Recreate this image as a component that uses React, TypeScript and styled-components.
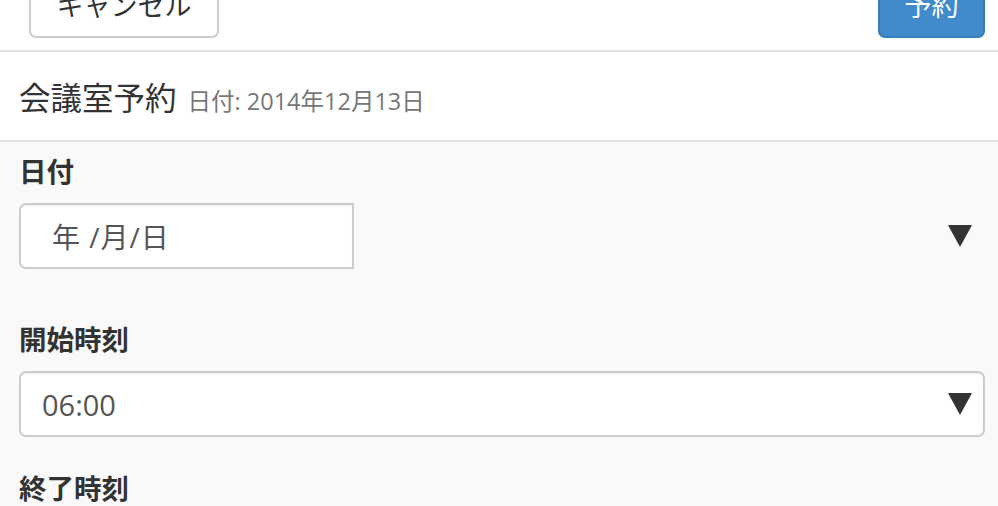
import React from "react";
import styled, { createGlobalStyle } from "styled-components";

const Global = createGlobalStyle`
  html, body { margin: 0; padding: 0; background: #f9f9f9; overflow: hidden; }
  body { font-family: "Open Sans", "Noto Sans CJK JP", sans-serif; color: #333; }
  * { box-sizing: border-box; }
`;

const Page = styled.div`
  width: 998px;
  margin-top: -28px;
`;

const ButtonBar = styled.div`
  display: flex;
  justify-content: space-between;
  align-items: flex-start;
  background: #fff;
  padding: 0 13px 12px 29px;
  border-bottom: 2px solid #e2e2e2;
`;

const Btn = styled.button<{ $primary?: boolean }>`
  height: 66px;
  padding: 0;
  white-space: nowrap;
  font-family: "Open Sans", "Noto Sans CJK JP", sans-serif;
  font-size: 27px;
  border-radius: 7px;
  border: 2px solid ${(p) => (p.$primary ? "#357ebd" : "#cccccc")};
  background: ${(p) => (p.$primary ? "#428bca" : "#ffffff")};
  color: ${(p) => (p.$primary ? "#ffffff" : "#333333")};
  width: ${(p) => (p.$primary ? "107px" : "190px")};
  line-height: 1;
`;

const TitleBar = styled.div`
  height: 90px;
  background: #fff;
  border-bottom: 2px solid #e2e2e2;
  display: flex;
  align-items: center;
  padding-left: 19px;
`;

const Title = styled.h3`
  margin: 0;
  font-weight: 400;
  font-size: 31.5px;
  color: #333;
  display: flex;
  align-items: baseline;
  gap: 11px;
`;

const Sub = styled.small`
  font-size: 23.5px;
  color: #777;
`;

const Form = styled.div`
  padding: 11px 13px 0 19px;
`;

const Group = styled.div<{ $mb: number }>`
  margin-bottom: ${(p) => p.$mb}px;
`;

const Label = styled.div`
  font-size: 27.5px;
  font-weight: 700;
  line-height: 37px;
  margin-bottom: 13px;
  color: #333;
`;

const DateRow = styled.div`
  display: flex;
  align-items: center;
  justify-content: space-between;
  padding-right: 13px;
`;

const DateBox = styled.div`
  width: 335px;
  height: 66px;
  background: #fff;
  border: 2px solid #cccccc;
  border-radius: 7px 0 0 7px;
  box-shadow: inset 0 1px 1px rgba(0, 0, 0, 0.075);
  display: flex;
  align-items: center;
  padding-left: 31px;
  font-size: 28px;
  letter-spacing: 1px;
  color: #555;
`;

const SelectBox = styled.div`
  height: 66px;
  background: #fff;
  border: 2px solid #cccccc;
  border-radius: 7px;
  box-shadow: inset 0 1px 1px rgba(0, 0, 0, 0.075);
  display: flex;
  align-items: center;
  justify-content: space-between;
  padding: 0 11px 0 21px;
  font-size: 29px;
  color: #555;
`;

const Arrow = () => (
  <svg width="24" height="22" viewBox="0 0 24 22">
    <polygon points="0,0 24,0 12,22" fill="#333" />
  </svg>
);

export default function App() {
  return (
    <Page>
      <Global />
      <ButtonBar>
        <Btn>キャンセル</Btn>
        <Btn $primary>予約</Btn>
      </ButtonBar>
      <TitleBar>
        <Title>
          会議室予約<Sub>日付: 2014年12月13日</Sub>
        </Title>
      </TitleBar>
      <Form>
        <Group $mb={52}>
          <Label>日付</Label>
          <DateRow>
            <DateBox>年 /月/日</DateBox>
            <Arrow />
          </DateRow>
        </Group>
        <Group $mb={33}>
          <Label>開始時刻</Label>
          <SelectBox>
            <span>06:00</span>
            <Arrow />
          </SelectBox>
        </Group>
        <Group $mb={20}>
          <Label>終了時刻</Label>
        </Group>
      </Form>
    </Page>
  );
}
